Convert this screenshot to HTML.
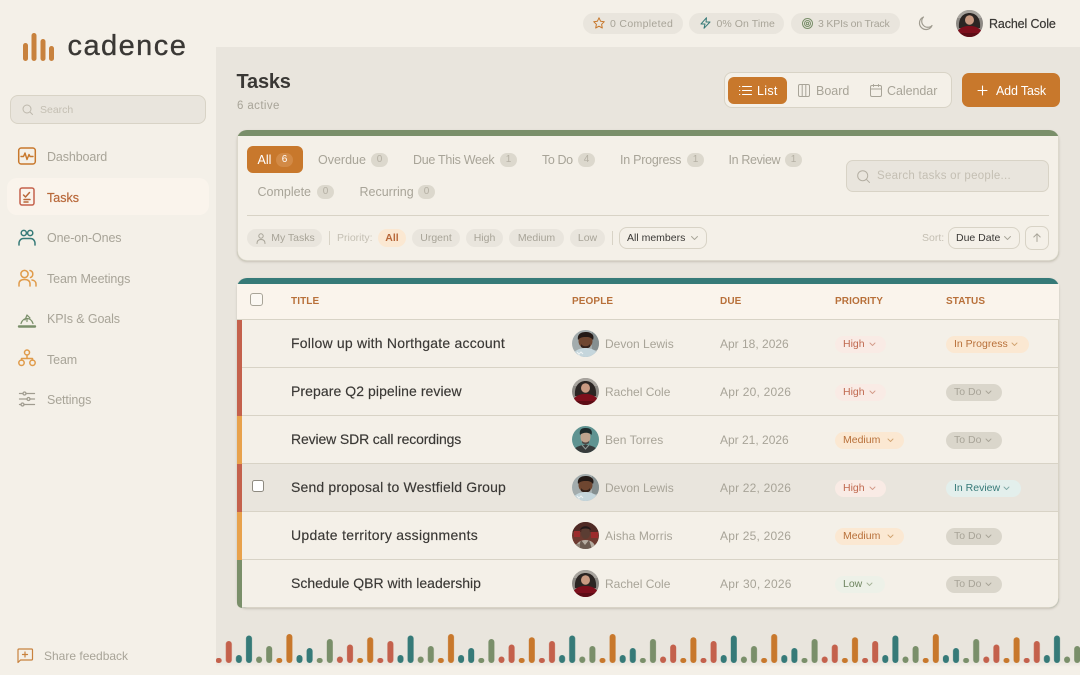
<!DOCTYPE html>
<html lang="en"><head><meta charset="utf-8"><title>Tasks - Cadence</title>
<style>
*{box-sizing:border-box;margin:0;padding:0}
html,body{width:1080px;height:675px;overflow:hidden;background:#f4f0e8}
body{position:relative;font-family:"Liberation Sans",sans-serif;color:#3a3835}
.a,.t{position:absolute}
.t{white-space:nowrap;line-height:20px;height:20px}
.g{color:#a8a498}.p{color:#c4bfb3}
.m{-webkit-text-stroke:.2px currentColor}
svg{position:absolute;overflow:visible}
.ic{fill:none;stroke-linecap:round;stroke-linejoin:round}
.nav{font-size:12.5px;letter-spacing:-.12px;color:#a8a498;left:47px}
.tab{font-size:12.5px;color:#a8a498}
.bd{position:absolute;height:14px;width:17px;border-radius:7px;background:#dcd8cd;color:#b4afa3;font-size:10px;line-height:14px;text-align:center}
.pill{position:absolute;height:18px;top:229px;border-radius:9px;background:#e9e5dd;color:#a8a498;font-size:10.5px;line-height:18px;text-align:center}
.sel{position:absolute;border:1px solid #d8d3c6;border-radius:8px;height:22px;top:227px;font-size:10.5px;line-height:20px;color:#3a3835;padding-left:7px}
.th{position:absolute;top:292px;line-height:20px;height:20px;font-size:10px;font-weight:bold;letter-spacing:.1px;color:#b8703a}
.title{left:291px;font-size:14px;letter-spacing:.22px;color:#3a3835;-webkit-text-stroke:.15px #3a3835}
.name{left:605px;font-size:12px;letter-spacing:0;color:#a8a498}
.due{left:720px;font-size:12px;letter-spacing:.2px;color:#a8a498}
.b{position:absolute;height:17px;border-radius:9px;font-size:10.5px;line-height:17px;padding-left:8px}
.hi{background:#f9ebe5;color:#c0694f;width:51px;left:835px}
.me{background:#fbe8d2;color:#b8703a;width:69px;left:835px}
.lo{background:#edf1e8;color:#6f8560;width:50px;left:835px}
.ip{background:#fbe8d2;color:#b8703a;width:83px;left:946px}
.td{background:#dad6cb;color:#a8a498;width:56px;left:946px}
.ir{background:#e3efec;color:#367a78;width:75px;left:946px}
.row{position:absolute;left:242px;width:816px;height:48px;border-bottom:1px solid #d8d3c6;background:#f4f0e8}
.st{position:absolute;left:237px;width:5px;height:48px}
.av{position:absolute;left:572px;width:27px;height:27px}
</style></head><body>

<svg width="0" height="0" style="left:0;top:0"><defs>
<clipPath id="cc"><circle cx="13.5" cy="13.5" r="13.5"/></clipPath>
<symbol id="rachel" viewBox="0 0 27 27"><g clip-path="url(#cc)"><rect width="27" height="27" fill="#8d8a85"/><path d="M0 0h27v8H0z" fill="#a8a49e"/><path d="M3 18C2 7 8 3 13.5 3S25 7 24 18z" fill="#2b2523"/><ellipse cx="13.5" cy="10" rx="4.5" ry="4.800" fill="#c99a82"/><path d="M0 27c0-7 5-11 13.500-11S27 20 27 27z" fill="#7d0f1c"/><path d="M0 23h27v4H0z" fill="#5d0c15"/></g></symbol>
<symbol id="devon" viewBox="0 0 27 27"><g clip-path="url(#cc)"><rect width="27" height="27" fill="#a3acad"/><path d="M20 0h7v20h-7z" fill="#858f90"/><ellipse cx="13.500" cy="11" rx="7" ry="7.500" fill="#6e4630"/><path d="M6 10C5 4 9 2 14 2s9 3 7 8c-2-3-5-3-7-3s-6 0-8 3z" fill="#241a16"/><path d="M9 14c2 3 7 3 9 0v3c-3 2-6 2-9 0z" fill="#33231c"/><path d="M0 27c1-6 7-9 13.500-9S26 21 27 27z" fill="#c5d6dc"/><path d="M5 22l2 2 2-2 2 2M6 25l2 1" stroke="#eef3f4" fill="none"/></g></symbol>
<symbol id="ben" viewBox="0 0 27 27"><g clip-path="url(#cc)"><rect width="27" height="27" fill="#5f9391"/><ellipse cx="13.500" cy="11" rx="5" ry="6.500" fill="#c0a38e"/><path d="M8 9C7 3 10 2 14 2s7 2 5.500 7c-2-3-9-3-11.500 0z" fill="#1f2a2b"/><path d="M10 15c2 2 5 2 7 0v2l-3.500 2L10 17z" fill="#4d4a47"/><path d="M0 27c1-5 7-8 13.500-8S26 22 27 27z" fill="#373b3b"/><path d="M10 19l3.500 4 3.500-4" stroke="#8f9a98" fill="none"/></g></symbol>
<symbol id="aisha" viewBox="0 0 27 27"><g clip-path="url(#cc)"><rect width="27" height="27" fill="#6d3a30"/><path d="M0 0h27v10H0z" fill="#4f2a25"/><path d="M2 9h6v6H2zM19 10h7v6h-7z" fill="#9c2c2c"/><ellipse cx="13.500" cy="11" rx="4.500" ry="6" fill="#5b3d33"/><path d="M8 8c1-5 10-5 11 0-3-2-8-2-11 0z" fill="#22191a"/><path d="M3 27c1-6 5-9 10.500-9S23 21 24 27z" fill="#b5aca0"/><path d="M9 18l4 5 4-5 3 9H6z" fill="#6b5b50"/><path d="M3 22h5v5H3z" fill="#8f8276"/></g></symbol>
</defs></svg>

<!-- Main background -->
<div class="a" style="left:216px;top:47px;width:864px;height:617px;background:#e9e5dd"></div>
<div class="a" style="left:216px;top:662px;width:864px;height:5px;background:linear-gradient(#e9e5dd,#f4f0e8)"></div>

<!-- Logo -->
<svg style="left:0;top:0" width="216" height="70" fill="#c8823e"><rect x="23" y="43" width="5" height="18" rx="2.500"/><rect x="31.500" y="33" width="5" height="28" rx="2.500"/><rect x="40.500" y="39" width="5" height="22" rx="2.500"/><rect x="49" y="46" width="5" height="15" rx="2.500"/></svg>
<div class="t" style="left:67.500px;top:35px;height:22px;line-height:22px;font-size:29px;letter-spacing:1.45px;color:#3a3835;-webkit-text-stroke:.35px #3a3835">cadence</div>

<!-- Sidebar search -->
<div class="a" style="left:10px;top:95px;width:196px;height:29px;background:#e9e5dd;border:1px solid #d8d3c6;border-radius:8px"></div>
<svg style="left:22px;top:104px" width="11" height="11" viewBox="0 0 11 11" class="ic" stroke="#bdb8ac" stroke-width="1"><circle cx="5" cy="5" r="4"/><path d="M8 8l2.500 2.500"/></svg>
<div class="t p" style="left:40px;top:100px;font-size:10.5px">Search</div>

<!-- Nav -->
<div class="a" style="left:7px;top:178px;width:202px;height:37px;background:#faf4ec;border-radius:10px"></div>
<svg class="ic" style="left:18px;top:147px" width="18" height="18" viewBox="0 0 18 18" stroke="#c8782c" stroke-width="1.500"><rect x="0.700" y="1" width="16.600" height="16" rx="2.500"/><path d="M3 9.500h2.500l1.500-3.500 2 6.500 2-5 1 2h3" stroke-width="1.400"/></svg>
<div class="t nav" style="top:147px">Dashboard</div>
<svg class="ic" style="left:19px;top:187px" width="16" height="19" viewBox="0 0 16 19" stroke="#c4614c" stroke-width="1.500"><rect x="1" y="1" width="14" height="17" rx="2"/><path d="M4.500 8l2 2 4-4.500M5 12.500h6M5 15h4" stroke="#b8683a"/></svg>
<div class="t nav m" style="top:188px;color:#b8683a;letter-spacing:0">Tasks</div>
<svg class="ic" style="left:18px;top:229px" width="18" height="17" viewBox="0 0 18 17" stroke="#367a78" stroke-width="1.500"><circle cx="5.800" cy="4" r="2.600"/><circle cx="12.200" cy="4" r="2.600"/><path d="M1 16v-1.500c0-3 2-5 4.500-5h7c2.500 0 4.500 2 4.500 5V16"/></svg>
<div class="t nav" style="top:228px">One-on-Ones</div>
<svg class="ic" style="left:18px;top:269px" width="19" height="18" viewBox="0 0 19 18" stroke="#e09b4a" stroke-width="1.500"><circle cx="6.500" cy="5" r="3.600"/><path d="M1 17v-2c0-3 2-4.500 5.500-4.500S12 12 12 15v2M12 1.500c2 .5 2.800 2 2.800 3.500S14 8 12.500 8.500M14 11c2.500.3 4 2 4 4v2"/></svg>
<div class="t nav" style="top:269px">Team Meetings</div>
<svg class="ic" style="left:18px;top:311px" width="18" height="17" viewBox="0 0 18 17" stroke="#7a8f6a"><path d="M1 15.500h16" stroke-width="2.400"/><path d="M3 12.500c1-3 3-5 6-5s5 2 6 5M9 7.500v3M9 4l-2 5M9 4l3 3" stroke-width="1.200"/></svg>
<div class="t nav" style="top:309px">KPIs &amp; Goals</div>
<svg class="ic" style="left:18px;top:349px" width="18" height="18" viewBox="0 0 18 18" stroke="#e09b4a" stroke-width="1.500"><circle cx="9" cy="3.500" r="2.500"/><circle cx="3.500" cy="13.800" r="2.700"/><circle cx="14.500" cy="13.800" r="2.700"/><path d="M9 6v3.500M3.500 11V9.500h11V11"/></svg>
<div class="t nav" style="top:350px">Team</div>
<svg class="ic" style="left:19px;top:391px" width="16" height="16" viewBox="0 0 16 16" stroke="#a09c90" stroke-width="1.300"><path d="M0.500 2.500h3.500M7 2.500h8.500M0.500 8h7.500M11 8h4.500M0.500 13.500h1.500M5 13.500h10.500"/><circle cx="5.500" cy="2.500" r="1.500"/><circle cx="9.500" cy="8" r="1.500"/><circle cx="3.500" cy="13.500" r="1.500"/></svg>
<div class="t nav" style="top:390px">Settings</div>

<svg class="ic" style="left:17px;top:648px" width="16" height="16" viewBox="0 0 16 16" stroke="#c8823e" stroke-width="1.200"><path d="M1 14.500V2c0-.6.400-1 1-1h12.500c.6 0 1 .400 1 1v9c0 .6-.400 1-1 1H3.500z"/><path d="M8 4v5M5.500 6.500h5"/></svg>
<div class="t g" style="left:44px;top:646px;font-size:12px;letter-spacing:0">Share feedback</div>

<!-- Top stats -->
<div class="a" style="left:583px;top:13px;width:100px;height:21px;border-radius:11px;background:#e9e5dd"></div>
<svg class="ic" style="left:593px;top:17px" width="12" height="12" viewBox="0 0 12 12" stroke="#c8782c" stroke-width="1"><path d="M6 .8l1.600 3.400 3.700.5-2.700 2.600.7 3.700L6 9.200 2.700 11l.7-3.700L.7 4.700l3.700-.5z"/></svg>
<div class="t g" style="left:610px;top:14px;font-size:10.500px;letter-spacing:.33px">0 Completed</div>
<div class="a" style="left:689px;top:13px;width:95px;height:21px;border-radius:11px;background:#e9e5dd"></div>
<svg class="ic" style="left:700px;top:17px" width="11" height="12" viewBox="0 0 11 12" stroke="#367a78" stroke-width="1"><path d="M6.500.7L1 7h4l-1 4.300L10 5H6z"/></svg>
<div class="t g" style="left:716.500px;top:14px;font-size:10.500px;letter-spacing:.07px">0% On Time</div>
<div class="a" style="left:791px;top:13px;width:109px;height:21px;border-radius:11px;background:#e9e5dd"></div>
<svg class="ic" style="left:802px;top:18px" width="11" height="11" viewBox="0 0 11 11" stroke="#7a8f6a" stroke-width="1"><circle cx="5.500" cy="5.500" r="5"/><circle cx="5.500" cy="5.500" r="3"/><circle cx="5.500" cy="5.500" r="1.200"/></svg>
<div class="t g" style="left:818px;top:14px;font-size:10.500px;letter-spacing:-.17px">3 KPIs on Track</div>
<svg class="ic" style="left:918px;top:16px" width="15" height="15" viewBox="0 0 15 15" stroke="#a09c90" stroke-width="1.200"><path d="M5.500 1A6.500 6.500 0 1 0 14 9.500 6 6 0 0 1 5.500 1z"/></svg>
<svg style="left:956px;top:10px" width="27" height="27"><use href="#rachel"/></svg>
<div class="t m" style="left:989px;top:14px;font-size:12.500px;letter-spacing:-.13px">Rachel Cole</div>

<!-- Heading -->
<div class="t" style="left:236.500px;top:72px;font-size:20px;font-weight:bold;letter-spacing:-.2px">Tasks</div>
<div class="t g" style="left:237px;top:96px;font-size:11.500px;letter-spacing:.4px">6 active</div>

<div class="a" style="left:724px;top:72px;width:228px;height:36px;background:#f4f0e8;border:1px solid #d8d3c6;border-radius:8px"></div>
<div class="a" style="left:728px;top:77px;width:59px;height:27px;background:#c8782c;border-radius:6px"></div>
<svg class="ic" style="left:739px;top:85px" width="13" height="11" viewBox="0 0 13 11" stroke="#fff" stroke-width="1.100"><path d="M3.500 1.500H12.500M3.500 5.500H12.500M3.500 9.500H12.500M.5 1.500h.3M.5 5.500h.3M.5 9.500h.3"/></svg>
<div class="t" style="left:757px;top:81px;font-size:12.500px;color:#fff;letter-spacing:.3px">List</div>
<svg class="ic" style="left:798px;top:84px" width="12" height="13" viewBox="0 0 12 13" stroke="#a8a498" stroke-width="1"><rect x=".5" y=".5" width="11" height="12" rx="1.500"/><path d="M4.200.5v12M7.800.5v12"/></svg>
<div class="t g" style="left:816px;top:81px;font-size:12.500px">Board</div>
<svg class="ic" style="left:870px;top:84px" width="12" height="13" viewBox="0 0 12 13" stroke="#a8a498" stroke-width="1"><rect x=".5" y="1.500" width="11" height="11" rx="1.500"/><path d="M.5 5h11M3.500.5v2M8.500.5v2"/></svg>
<div class="t g" style="left:887px;top:81px;font-size:12.500px;letter-spacing:-.05px">Calendar</div>
<div class="a" style="left:962px;top:73px;width:98px;height:34px;background:#c8782c;border-radius:7px"></div>
<svg class="ic" style="left:978px;top:86px" width="9" height="9" viewBox="0 0 9 9" stroke="#fff" stroke-width="1.100"><path d="M4.500 0v9M0 4.500h9"/></svg>
<div class="t" style="left:996px;top:81px;font-size:12.500px;color:#fff;letter-spacing:-.15px">Add Task</div>

<!-- Filter card -->
<div class="a" style="left:237px;top:130px;width:822px;height:131px;background:#7a8f6a;border-radius:10px;box-shadow:0 1px 2px rgba(120,110,90,.3)"></div>
<div class="a" style="left:237px;top:136px;width:822px;height:125px;background:#f4f0e8;border-radius:0 0 10px 10px;border:1px solid #dcd8cc;border-top:0"></div>
<div class="a" style="left:247px;top:146px;width:56px;height:27px;background:#c8782c;border-radius:6px"></div>
<div class="t" style="left:257.500px;top:150px;font-size:12.500px;color:#fff">All</div>
<div class="bd" style="left:276px;top:153px;background:#d28a46;color:#fff">6</div>
<div class="t tab" style="left:318px;top:150px">Overdue</div><div class="bd" style="left:371px;top:153px">0</div>
<div class="t tab" style="left:413px;top:150px;letter-spacing:-.28px">Due This Week</div><div class="bd" style="left:500px;top:153px">1</div>
<div class="t tab" style="left:542px;top:150px;letter-spacing:-.4px">To Do</div><div class="bd" style="left:578px;top:153px">4</div>
<div class="t tab" style="left:620px;top:150px;letter-spacing:-.25px">In Progress</div><div class="bd" style="left:687px;top:153px">1</div>
<div class="t tab" style="left:728.500px;top:150px;letter-spacing:-.35px">In Review</div><div class="bd" style="left:785px;top:153px">1</div>
<div class="t tab" style="left:257.500px;top:182px">Complete</div><div class="bd" style="left:317px;top:185px">0</div>
<div class="t tab" style="left:359.500px;top:182px">Recurring</div><div class="bd" style="left:418px;top:185px">0</div>

<div class="a" style="left:846px;top:160px;width:203px;height:32px;background:#e9e5dd;border:1px solid #d8d3c6;border-radius:7px"></div>
<svg class="ic" style="left:857px;top:170px" width="13" height="13" viewBox="0 0 13 13" stroke="#b4afa3" stroke-width="1"><circle cx="5.700" cy="5.700" r="5"/><path d="M9.500 9.500l3 3"/></svg>
<div class="t p" style="left:877px;top:166px;font-size:11.500px;letter-spacing:.27px">Search tasks or people...</div>

<div class="a" style="left:247px;top:215px;width:802px;height:1px;background:#d8d3c6"></div>

<div class="pill" style="left:247px;width:75px;padding-left:17px">My Tasks</div>
<svg class="ic" style="left:256px;top:233px" width="10" height="11" viewBox="0 0 10 11" stroke="#a8a498" stroke-width="1"><circle cx="5" cy="3" r="2.200"/><path d="M1 10.500c0-2.500 1.500-4 4-4s4 1.500 4 4"/></svg>
<div class="a" style="left:329px;top:231px;width:1px;height:14px;background:#d8d3c6"></div>
<div class="t p" style="left:337px;top:228px;font-size:10.500px">Priority:</div>
<div class="pill" style="left:378px;width:28px;background:#fbe8d2;color:#b8683a;font-weight:bold">All</div>
<div class="pill" style="left:412px;width:48px">Urgent</div>
<div class="pill" style="left:466px;width:37px">High</div>
<div class="pill" style="left:509px;width:55px">Medium</div>
<div class="pill" style="left:570px;width:35px">Low</div>
<div class="a" style="left:612px;top:231px;width:1px;height:14px;background:#d8d3c6"></div>
<div class="sel" style="left:619px;width:88px">All members</div>
<svg class="ic" style="left:691px;top:236px" width="7" height="4" viewBox="0 0 7 4" stroke="#a8a498" stroke-width=".9"><path d="M.5.500l3 3 3-3"/></svg>
<div class="t p" style="left:922px;top:228px;font-size:10.500px">Sort:</div>
<div class="sel" style="left:948px;width:72px">Due Date</div>
<svg class="ic" style="left:1004px;top:236px" width="7" height="4" viewBox="0 0 7 4" stroke="#a8a498" stroke-width=".9"><path d="M.5.500l3 3 3-3"/></svg>
<div class="a" style="left:1025px;top:226px;width:24px;height:24px;border:1px solid #d8d3c6;border-radius:7px"></div>
<svg class="ic" style="left:1033px;top:233px" width="8" height="9" viewBox="0 0 8 9" stroke="#a8a498" stroke-width="1"><path d="M4 8.500V.8M.8 4L4 .8 7.200 4"/></svg>

<!-- Table -->
<div class="a" style="left:237px;top:278px;width:822px;height:330px;background:#367a78;border-radius:10px;box-shadow:0 1px 2px rgba(120,110,90,.3)"></div>
<div class="a" style="left:237px;top:284px;width:822px;height:324px;background:#f4f0e8;border:1px solid #d8d3c6;border-top:0;border-radius:0 0 10px 10px"></div>
<div class="a" style="left:237px;top:284px;width:822px;height:36px;background:#faf4ec;border-bottom:1px solid #d8d3c6"></div>
<div class="a" style="left:249.500px;top:293px;width:13px;height:13px;border:1.500px solid #a8a498;border-radius:3px;background:#fbf8f3"></div>
<div class="th" style="left:291px">TITLE</div><div class="th" style="left:572px">PEOPLE</div><div class="th" style="left:720px">DUE</div><div class="th" style="left:835px">PRIORITY</div><div class="th" style="left:946px">STATUS</div>

<div class="row" style="top:320px"></div><div class="row" style="top:368px"></div><div class="row" style="top:416px"></div><div class="row" style="top:464px;background:#e9e5dd"></div><div class="row" style="top:512px"></div><div class="row" style="top:560px;height:47px;border-bottom:0;border-radius:0 0 9px 0"></div>
<div class="st" style="top:320px;background:#c4614c"></div><div class="st" style="top:368px;background:#c4614c"></div><div class="st" style="top:416px;background:#e8a24c"></div><div class="st" style="top:464px;background:#c4614c"></div><div class="st" style="top:512px;background:#e8a24c"></div><div class="st" style="top:560px;height:48px;background:#7a8f6a;border-radius:0 0 0 8px"></div>
<div class="a" style="left:252px;top:480px;width:12px;height:12px;border:1px solid #8e8a80;border-radius:2.500px;background:#fff"></div>

<div class="t title" style="top:333px">Follow up with Northgate account</div>
<svg class="av" style="top:330px"><use href="#devon"/></svg>
<div class="t name" style="top:334px">Devon Lewis</div><div class="t due" style="top:334px;letter-spacing:0">Apr 18, 2026</div>
<div class="b hi" style="top:336px">High</div><div class="b ip" style="top:336px">In Progress</div>

<div class="t title" style="top:381px;letter-spacing:.07px">Prepare Q2 pipeline review</div>
<svg class="av" style="top:378px"><use href="#rachel"/></svg>
<div class="t name" style="top:382px">Rachel Cole</div><div class="t due" style="top:382px">Apr 20, 2026</div>
<div class="b hi" style="top:384px">High</div><div class="b td" style="top:384px">To Do</div>

<div class="t title" style="top:429px;letter-spacing:-.13px">Review SDR call recordings</div>
<svg class="av" style="top:426px"><use href="#ben"/></svg>
<div class="t name" style="top:430px;letter-spacing:.05px">Ben Torres</div><div class="t due" style="top:430px;letter-spacing:0">Apr 21, 2026</div>
<div class="b me" style="top:432px">Medium</div><div class="b td" style="top:432px">To Do</div>

<div class="t title" style="top:477px;letter-spacing:.16px">Send proposal to Westfield Group</div>
<svg class="av" style="top:474px"><use href="#devon"/></svg>
<div class="t name" style="top:478px">Devon Lewis</div><div class="t due" style="top:478px">Apr 22, 2026</div>
<div class="b hi" style="top:480px">High</div><div class="b ir" style="top:480px">In Review</div>

<div class="t title" style="top:525px;letter-spacing:.29px">Update territory assignments</div>
<svg class="av" style="top:522px"><use href="#aisha"/></svg>
<div class="t name" style="top:526px;letter-spacing:.08px">Aisha Morris</div><div class="t due" style="top:526px">Apr 25, 2026</div>
<div class="b me" style="top:528px">Medium</div><div class="b td" style="top:528px">To Do</div>

<div class="t title" style="top:573px;letter-spacing:0">Schedule QBR with leadership</div>
<svg class="av" style="top:570px"><use href="#rachel"/></svg>
<div class="t name" style="top:574px">Rachel Cole</div><div class="t due" style="top:574px;letter-spacing:.25px">Apr 30, 2026</div>
<div class="b lo" style="top:576px">Low</div><div class="b td" style="top:576px">To Do</div>

<!-- Pill chevrons -->
<svg class="ic" style="left:0;top:0" width="1080" height="675" stroke-width=".9">
<g stroke="#d39a88"><path d="M870 343l2.500 2.500 2.500-2.500M870 391l2.500 2.500 2.500-2.500M870 487l2.500 2.500 2.500-2.500"/></g>
<g stroke="#d0a26f"><path d="M888 439l2.500 2.500 2.500-2.500M888 535l2.500 2.500 2.500-2.500M1012 343l2.500 2.500 2.500-2.500"/></g>
<g stroke="#a8a498"><path d="M986 391l2.500 2.500 2.500-2.500M986 439l2.500 2.500 2.500-2.500M986 535l2.500 2.500 2.500-2.500M986 583l2.500 2.500 2.500-2.500"/></g>
<path d="M1004 487l2.500 2.500 2.500-2.500" stroke="#7fa8a5"/>
<path d="M867 583l2.500 2.500 2.500-2.500" stroke="#a5b398"/>
</svg>

<!-- Bottom rhythm bars -->
<svg style="left:216px;top:630px" width="864" height="36">
<defs><pattern id="bars" x="-.3" y="0" width="161.600" height="36" patternUnits="userSpaceOnUse">
<rect x="0" y="28" width="6" height="5" rx="2.500" fill="#c4614c"/>
<rect x="10.100" y="11" width="6" height="22" rx="3" fill="#c4614c"/>
<rect x="20.200" y="25" width="6" height="8" rx="3" fill="#367a78"/>
<rect x="30.300" y="5.500" width="6" height="27.500" rx="3" fill="#367a78"/>
<rect x="40.400" y="26.500" width="6" height="6.500" rx="3" fill="#7a8f6a"/>
<rect x="50.500" y="16" width="6" height="17" rx="3" fill="#7a8f6a"/>
<rect x="60.600" y="28" width="6" height="5" rx="2.500" fill="#c8782c"/>
<rect x="70.700" y="4" width="6" height="29" rx="3" fill="#c8782c"/>
<rect x="80.800" y="25" width="6" height="8" rx="3" fill="#367a78"/>
<rect x="90.900" y="18" width="6" height="15" rx="3" fill="#367a78"/>
<rect x="101" y="28" width="6" height="5" rx="2.500" fill="#7a8f6a"/>
<rect x="111.100" y="9" width="6" height="24" rx="3" fill="#7a8f6a"/>
<rect x="121.200" y="26.500" width="6" height="6.500" rx="3" fill="#c4614c"/>
<rect x="131.300" y="14.500" width="6" height="18.500" rx="3" fill="#c4614c"/>
<rect x="141.400" y="28" width="6" height="5" rx="2.500" fill="#c8782c"/>
<rect x="151.500" y="7.200" width="6" height="25.800" rx="3" fill="#c8782c"/>
</pattern></defs>
<rect width="864" height="36" fill="url(#bars)"/></svg>

</body></html>
